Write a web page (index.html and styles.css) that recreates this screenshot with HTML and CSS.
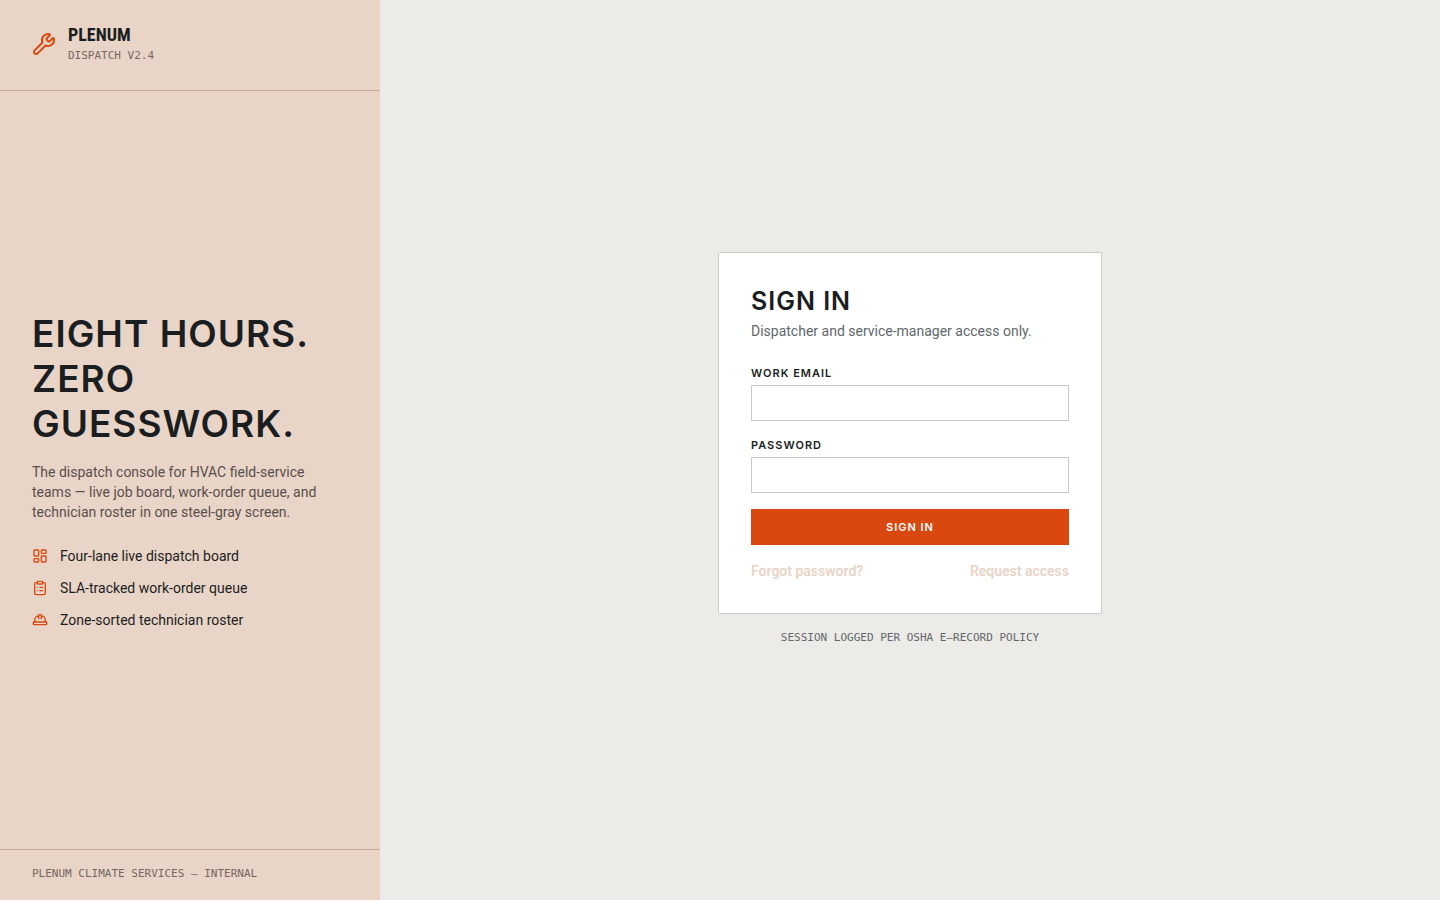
FILE: index.html
```html
<!DOCTYPE html>
<html lang="en">
<head>
<meta charset="utf-8">
<title>Plenum Dispatch – Sign in</title>
<link rel="stylesheet" href="styles.css">
</head>
<body>
<div class="layout">
  <aside class="panel">
    <header class="brand">
      <svg class="brand-icon" viewBox="0 0 24 24" aria-hidden="true"><path d="M14.7 6.3a1 1 0 0 0 0 1.4l1.6 1.6a1 1 0 0 0 1.4 0l3.106-3.105c.32-.322.863-.22.983.218a6 6 0 0 1-8.259 7.057l-7.91 7.91a1 1 0 0 1-2.999-3l7.91-7.91a6 6 0 0 1 7.057-8.259c.438.12.54.662.219.984z"/></svg>
      <div>
        <div class="brand-name">PLENUM</div>
        <div class="brand-version mono">DISPATCH V2.4</div>
      </div>
    </header>
    <section class="pitch">
      <h1 class="headline">EIGHT HOURS. ZERO GUESSWORK.</h1>
      <p class="lead">The dispatch console for HVAC field-service teams — live job board, work-order queue, and technician roster in one steel-gray screen.</p>
      <ul class="features">
        <li class="feature">
          <svg class="feature-icon" viewBox="0 0 24 24" aria-hidden="true"><rect x="3" y="3" width="7" height="9" rx="1"/><rect x="14" y="3" width="7" height="5" rx="1"/><rect x="14" y="12" width="7" height="9" rx="1"/><rect x="3" y="16" width="7" height="5" rx="1"/></svg>
          Four-lane live dispatch board
        </li>
        <li class="feature">
          <svg class="feature-icon" viewBox="0 0 24 24" aria-hidden="true"><rect x="8" y="2" width="8" height="4" rx="1"/><path d="M16 4h2a2 2 0 0 1 2 2v14a2 2 0 0 1-2 2H6a2 2 0 0 1-2-2V6a2 2 0 0 1 2-2h2M12 11h4M12 16h4M8 11h.01M8 16h.01"/></svg>
          SLA-tracked work-order queue
        </li>
        <li class="feature">
          <svg class="feature-icon" viewBox="0 0 24 24" aria-hidden="true"><path d="M10 10V5a1 1 0 0 1 1-1h2a1 1 0 0 1 1 1v5M14 6a6 6 0 0 1 6 6v3M4 15v-3a6 6 0 0 1 6-6"/><rect x="2" y="15" width="20" height="4" rx="1"/></svg>
          Zone-sorted technician roster
        </li>
      </ul>
    </section>
    <footer class="panel-foot mono">PLENUM CLIMATE SERVICES — INTERNAL</footer>
  </aside>
  <main class="main">
    <form class="card">
      <h2 class="title">SIGN IN</h2>
      <p class="subtitle">Dispatcher and service-manager access only.</p>
      <label class="label" for="email">WORK EMAIL</label>
      <input class="input" id="email" type="email">
      <label class="label" for="password">PASSWORD</label>
      <input class="input" id="password" type="password">
      <button class="submit" type="submit">SIGN IN</button>
      <div class="links">
        <a class="link" href="#">Forgot password?</a>
        <a class="link" href="#">Request access</a>
      </div>
    </form>
    <p class="notice mono">SESSION LOGGED PER OSHA E–RECORD POLICY</p>
  </main>
</div>
</body>
</html>
```
FILE: styles.css
```css
* { box-sizing: border-box; }

body {
  margin: 0;
  background: #ecebe7;
  color: #1b1e21;
  font: 14px/20px Roboto, "Noto Sans", sans-serif;
}

h1, h2, p, ul { margin: 0; padding: 0; }

.layout {
  display: grid;
  grid-template-columns: 380px 1fr;
  min-height: 100vh;
}

.panel {
  display: flex;
  flex-direction: column;
  background: #e9d4c8;
}

.brand {
  display: flex;
  align-items: center;
  gap: 12px;
  padding: 24px 32px 26px;
  border-bottom: 1px solid #c6a69c;
}

.brand-icon, .feature-icon {
  flex: none;
  fill: none;
  stroke: #d9480f;
  stroke-width: 2;
  stroke-linecap: round;
  stroke-linejoin: round;
}

.brand-icon { width: 24px; height: 24px; }
.feature-icon { width: 16px; height: 16px; }

.brand-name {
  font: 700 18px/22px "Liberation Sans Narrow", "Roboto Condensed", Roboto, sans-serif;
}

.brand-version { margin-top: 2px; }

.mono {
  color: #766761;
  font: 11px/16px "DejaVu Sans Mono", monospace;
}

.pitch {
  flex: 1;
  display: flex;
  flex-direction: column;
  justify-content: center;
  padding: 0 32px;
}

.headline {
  font: 600 37px/45px Inter, sans-serif;
  letter-spacing: 1px;
}

.lead {
  max-width: 304px;
  margin-top: 16px;
  color: #594f4b;
}

.features {
  display: grid;
  gap: 12px;
  margin-top: 24px;
  list-style: none;
}

.feature {
  display: flex;
  align-items: center;
  gap: 12px;
}

.panel-foot {
  padding: 16px 32px 18px;
  border-top: 1px solid #c6a69c;
}

.main {
  display: flex;
  flex-direction: column;
  align-items: center;
  justify-content: center;
}

.card {
  display: flex;
  flex-direction: column;
  width: 384px;
  padding: 32px;
  background: #fff;
  border: 1px solid #cbcbc7;
  border-radius: 2px;
}

.title {
  font: 600 25px/32px Inter, sans-serif;
  letter-spacing: 1px;
}

.subtitle {
  margin: 4px 0 24px;
  color: #62676b;
}

.label {
  margin-bottom: 4px;
  font: 600 11px/16px Inter, sans-serif;
  letter-spacing: 1px;
}

.input {
  width: 100%;
  height: 36px;
  margin-bottom: 16px;
  padding: 0 12px;
  background: #fff;
  border: 1px solid #c8c8c8;
  border-radius: 0;
  font: inherit;
}

.submit {
  height: 36px;
  padding: 0;
  background: #d9480f;
  border: 0;
  color: #fff;
  font: 600 11px/16px Inter, sans-serif;
  letter-spacing: 1px;
}

.links {
  display: flex;
  justify-content: space-between;
  margin-top: 16px;
}

.link {
  color: #e9d4c8;
  font-weight: 600;
  text-decoration: none;
}

.notice {
  margin: 16px 0 2px;
  color: #62676b;
}
```
